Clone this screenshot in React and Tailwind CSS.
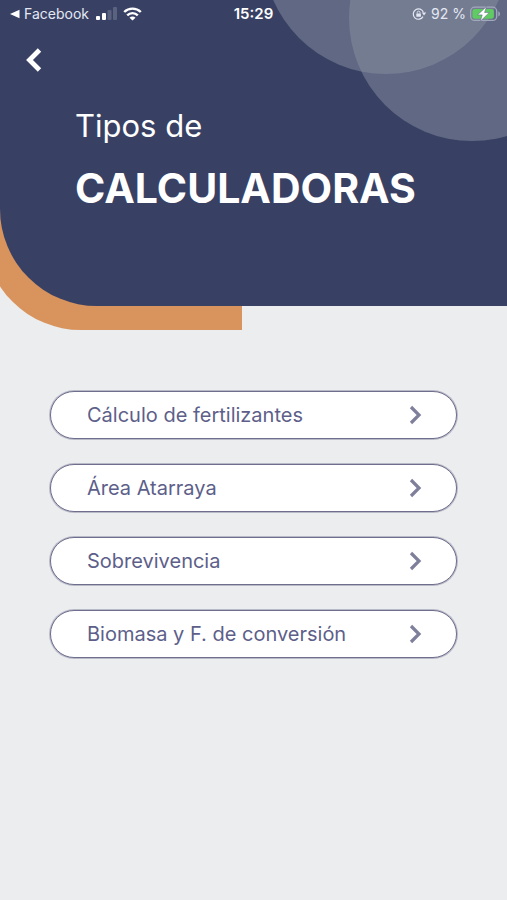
import React from "react";

const CALCULATORS = [
  { id: "fertilizantes", label: "Cálculo de fertilizantes" },
  { id: "atarraya", label: "Área Atarraya" },
  { id: "sobrevivencia", label: "Sobrevivencia" },
  { id: "biomasa", label: "Biomasa y F. de conversión" },
];

function StatusBar() {
  return (
    <div className="relative grid grid-cols-3 items-center h-7 px-1.5 text-sm text-[#e4e8f2]">
      <div className="flex items-center gap-1.5">
        <button type="button" className="flex items-center gap-1 pl-0.5">
          <svg width="12" height="10" viewBox="0 0 12 10" aria-hidden="true">
            <path d="M11.5 0.8v8.4L2 5z" fill="#fff" />
          </svg>
          <span>Facebook</span>
        </button>
        <svg width="22" height="14" viewBox="0 0 22 14" aria-hidden="true">
          <rect x="1" y="9" width="4" height="4" rx="1" fill="#fff" />
          <rect x="7" y="6" width="4" height="7" rx="1" fill="#fff" />
          <rect x="12.5" y="3" width="4" height="10" rx="1" fill="#5a6280" />
          <rect x="18" y="0" width="4" height="13" rx="1" fill="#5a6280" />
        </svg>
        <svg width="19" height="14" viewBox="0 0 19 14" fill="none" stroke="#fff" strokeWidth="2.4" aria-hidden="true">
          <path d="M1.2 5a11.8 11.8 0 0 1 16.600 0" />
          <path d="M4.200 8.300a7.500 7.500 0 0 1 10.600 0" />
          <path d="M9.500 13.600 6.500 10.700a4.200 4.200 0 0 1 6 0z" fill="#fff" stroke="none" />
        </svg>
      </div>
      <div className="text-center text-[15px] font-semibold text-white">15:29</div>
      <div className="flex items-center justify-end gap-1">
        <svg width="15" height="14" viewBox="0 0 15 14" fill="none" stroke="#e4e8f2" aria-hidden="true">
          <path d="M11 9.600A5.200 5.200 0 1 1 11.400 5.400" strokeWidth="1.200" />
          <path d="M9.800 5.400h4.400l-2.200 3z" fill="#e4e8f2" stroke="none" />
          <rect x="4.300" y="6.400" width="4.600" height="3.400" rx="0.500" fill="#e4e8f2" stroke="none" />
          <path d="M5.200 6.600V5.600a1.400 1.400 0 0 1 2.800 0v1" strokeWidth="0.900" />
        </svg>
        <span className="whitespace-nowrap">92 %</span>
        <svg width="31" height="16" viewBox="0 0 31 16" aria-hidden="true">
          <rect x="0.7" y="1.200" width="26" height="13.200" rx="4" fill="none" stroke="#a3a9bd" strokeWidth="1.300" />
          <rect x="2.400" y="3" width="21.500" height="9.800" rx="2.400" fill="#5fcb62" />
          <path d="M28.300 5.200a3 3 0 0 1 0 5.400z" fill="#a3a9bd" />
          <path
            d="M16.500 0.500 7.500 8.900h4.700L10.300 15.300l9-8.800h-4.700z"
            fill="#fff"
            stroke="#68708b"
            strokeWidth="0.600"
          />
        </svg>
      </div>
    </div>
  );
}

function Header() {
  return (
    <header className="relative pb-6">
      {/* orange strip peeking out from under the navy panel */}
      <div className="absolute bottom-0 -left-4 h-40 w-[258px] rounded-bl-[97px] bg-[#d9935c]" />
      <div className="relative h-[306px] overflow-hidden rounded-bl-[97px] bg-[#384164]">
        <div className="absolute -top-[172px] -right-[2px] size-[246px] rounded-full bg-[#888fa2]/50" />
        <div className="absolute -top-[105px] -right-[88px] size-[246px] rounded-full bg-[#888fa2]/50" />
        <StatusBar />
        <div className="relative px-6 pt-5">
          <button type="button" aria-label="Volver" className="block">
            <svg width="20" height="24" viewBox="0 0 20 24" fill="none" stroke="#fff" strokeWidth="4.800" aria-hidden="true">
              <path d="M15.500 2 5.500 12l10 10" />
            </svg>
          </button>
        </div>
        <h1 className="relative px-[75px] pt-[34px] text-white">
          <span className="block text-[31px] leading-10">Tipos de</span>
          <span className="block pt-[18px] text-[41px] leading-12 font-bold">CALCULADORAS</span>
        </h1>
      </div>
    </header>
  );
}

export default function App() {
  return (
    <div className="min-h-screen overflow-hidden bg-[#ebedef] font-['Inter','Liberation_Sans',sans-serif]">
      <Header />
      <nav className="px-[50px] pt-[61px] pb-10">
        <ul className="flex flex-col gap-[25px]">
          {CALCULATORS.map((c) => (
            <li key={c.id}>
              <a
                href={`#${c.id}`}
                className="flex h-12 items-center justify-between rounded-full border border-[#6f6e8d] bg-white pl-9 pr-8 text-xl text-[#5d5f8a] ring-1 ring-[#6f6e8d]/40"
              >
                <span>{c.label}</span>
                <svg width="18" height="20" viewBox="0 0 18 20" fill="none" stroke="#7e7f9b" strokeWidth="3.200" aria-hidden="true">
                  <path d="m5 2 8 8-8 8" />
                </svg>
              </a>
            </li>
          ))}
        </ul>
      </nav>
    </div>
  );
}
